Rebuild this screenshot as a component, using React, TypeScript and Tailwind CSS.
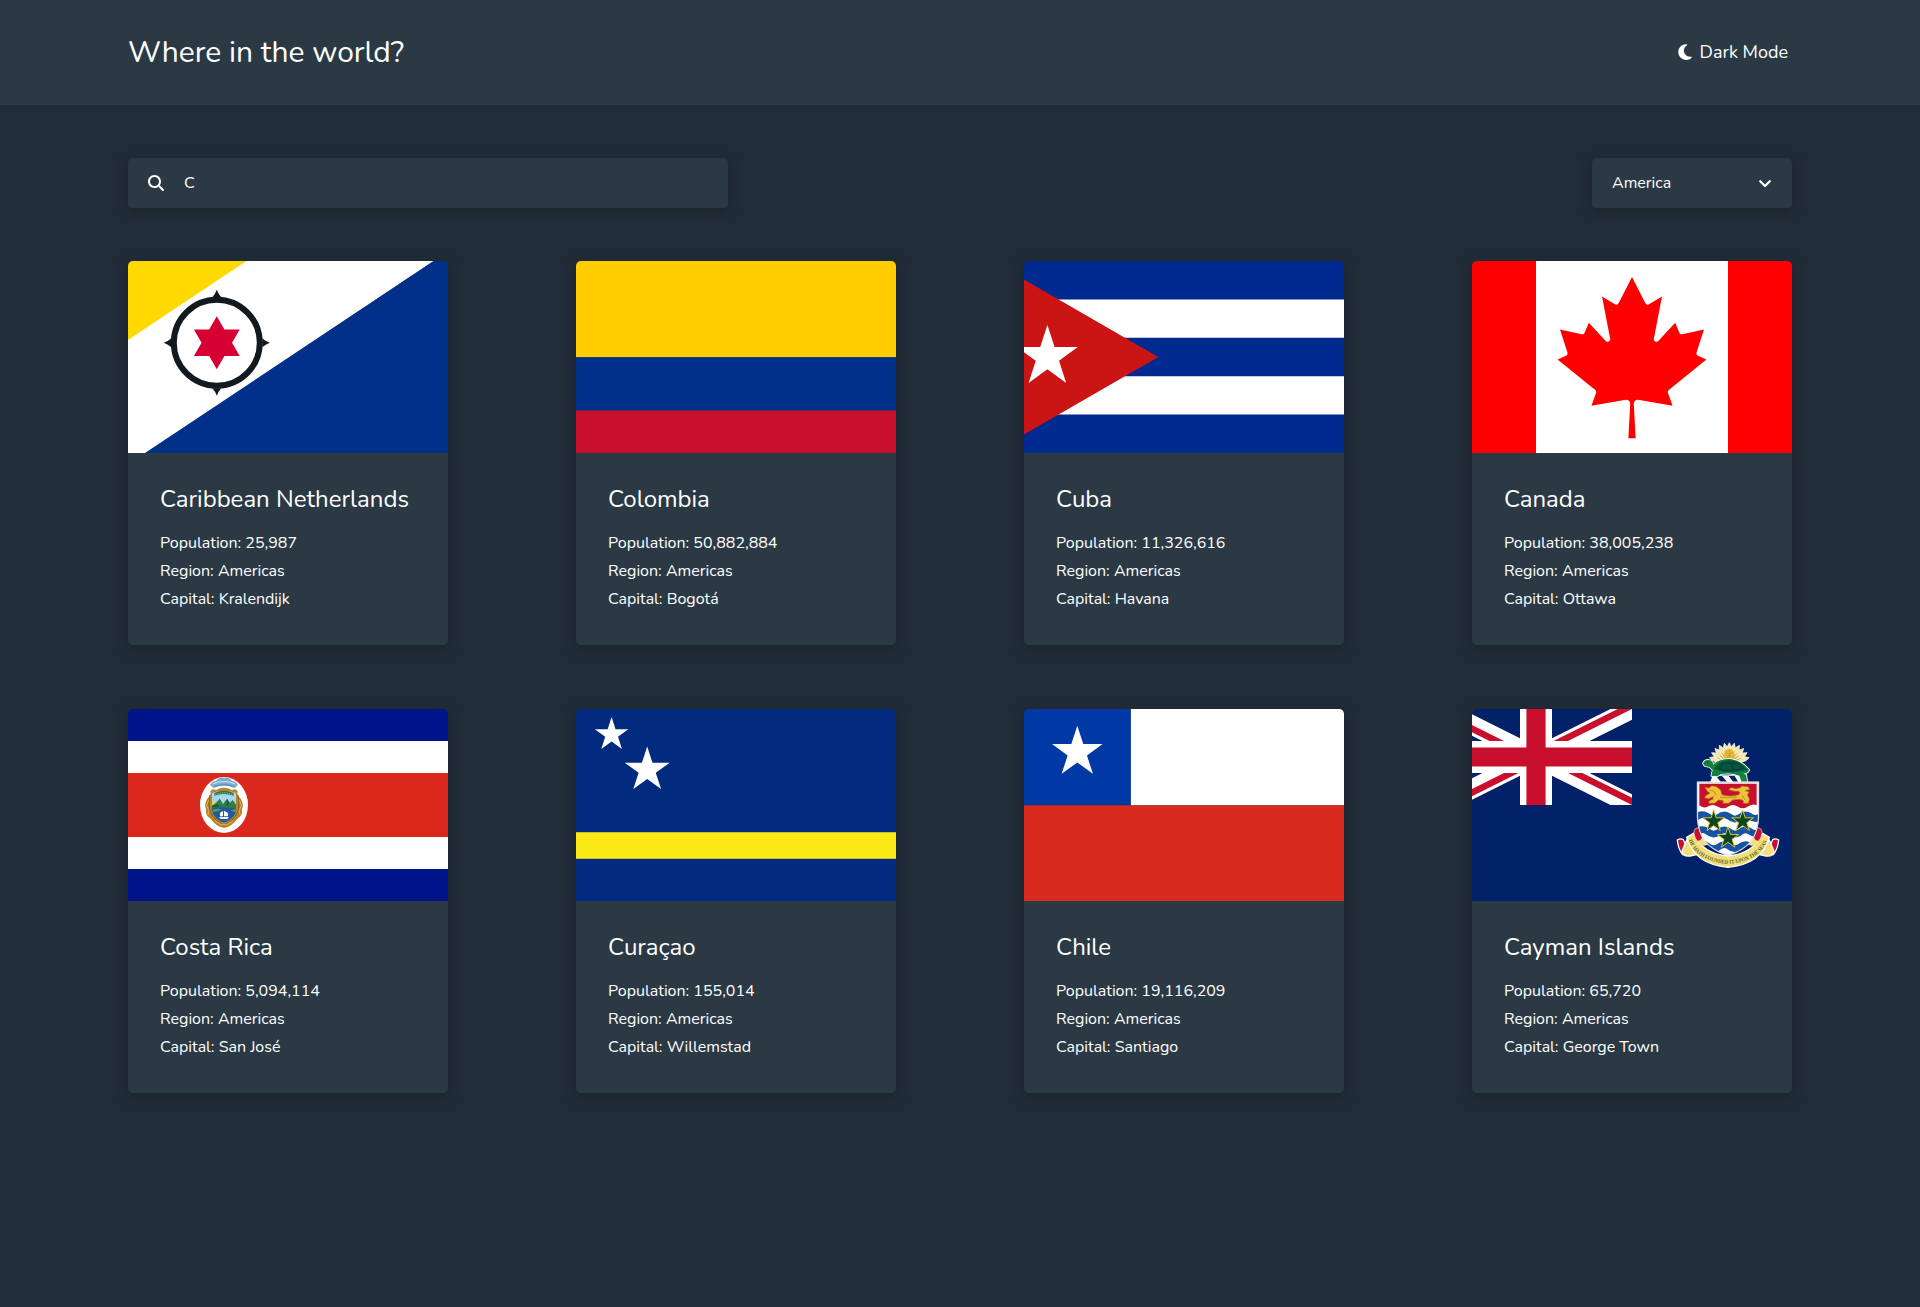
import type { ReactNode } from "react";
import { FaMagnifyingGlass, FaMoon } from "react-icons/fa6";

/* Points of a five-pointed star with one point up. */
function starPoints(cx: number, cy: number, r: number) {
  return Array.from({ length: 10 }, (_, i) => {
    const radius = i % 2 === 0 ? r : r * 0.382;
    const angle = (Math.PI / 5) * i - Math.PI / 2;
    return `${(cx + radius * Math.cos(angle)).toFixed(2)},${(cy + radius * Math.sin(angle)).toFixed(2)}`;
  }).join(" ");
}

function Bonaire() {
  return (
    <>
      <path d="M117 0H306L18 192H0V78Z" fill="#fff" />
      <path d="M0 0H118.500L0 79Z" fill="#ffd900" />
      <path d="M305.500 0H320V192H17Z" fill="#003087" />
      <circle cx="88.800" cy="81.700" r="43" fill="none" stroke="#121a20" strokeWidth="6" />
      {[0, 90, 180, 270].map((a) => (
        <path key={a} transform={`rotate(${a} 88.800 81.700)`} d="M88.800 28.700Q90.300 33 93.300 36.200H84.300Q87.300 33 88.800 28.700Z" fill="#121a20" />
      ))}
      <path d="M88.800 55.200L111.700 94.900H65.900ZM88.800 108.200L65.900 68.500H111.700Z" fill="#d60033" />
    </>
  );
}

function Colombia() {
  return (
    <>
      <rect width="320" height="96.300" fill="#ffcd00" />
      <rect y="96.300" width="320" height="53.300" fill="#003087" />
      <rect y="149.500" width="320" height="42.500" fill="#c8102e" />
    </>
  );
}

function Cuba() {
  return (
    <>
      <rect width="320" height="192" fill="#002a8f" />
      <path d="M0 38.400H320V76.800H0ZM0 115.200H320V153.600H0Z" fill="#fff" />
      <path d="M-32 0L134.300 96L-32 192Z" fill="#cb1515" />
      <polygon points={starPoints(23.4, 96, 32)} fill="#fff" />
    </>
  );
}

function Canada() {
  return (
    <>
      <rect width="320" height="192" fill="#f00" />
      <rect x="64" width="192" height="192" fill="#fff" />
      <path
        transform="translate(-32 0) scale(.04)"
        fill="#f00"
        d="m4890 4430-45-863a95 95 0 0 1 111-98l859 151-116-320a65 65 0 0 1 20-73l941-762-212-99a65 65 0 0 1-34-79l186-572-542 115a65 65 0 0 1-73-38l-105-247-423 454a65 65 0 0 1-111-57l204-1052-327 189a65 65 0 0 1-91-27l-332-652-332 652a65 65 0 0 1-91 27l-327-189 204 1052a65 65 0 0 1-111 57l-423-454-105 247a65 65 0 0 1-73 38l-542-115 186 572a65 65 0 0 1-34 79l-212 99 941 762a65 65 0 0 1 20 73l-116 320 859-151a95 95 0 0 1 111 98l-45 863z"
      />
    </>
  );
}

function CostaRica() {
  return (
    <>
      <rect width="320" height="192" fill="#001489" />
      <rect y="32" width="320" height="128" fill="#fff" />
      <rect y="64" width="320" height="64" fill="#da291c" />
      <ellipse cx="96" cy="96" rx="24" ry="28" fill="#fff" />
      <g transform="translate(52 51) scale(.3333)">
        <path d="M90 75Q94 64 108 63Q116 50 132 53Q148 50 156 63Q170 64 174 75L164 84Q132 70 100 84Z" fill="#7fadcf" />
        <path d="M98 72Q132 57 166 72" fill="none" stroke="#cfe3f0" strokeWidth="3" />
        <path d="M102 80Q132 68 162 80" fill="none" stroke="#5a93bd" strokeWidth="4" />
        <path d="M91 94Q96 84 108 90Q132 76 156 90Q168 84 173 94Q169 106 182 116Q193 132 186 148Q190 166 172 176Q158 198 132 204Q106 198 92 176Q74 166 78 148Q71 132 82 116Q95 106 91 94Z" fill="#b8842c" />
        <path d="M96 99Q132 86 168 99V148Q164 176 132 188Q100 176 96 148Z" fill="#a8d8ee" />
        <path d="M103 99Q132 86 161 99V107Q132 97 103 107Z" fill="#31743d" />
        <path d="M106 104Q132 93 158 104" fill="none" stroke="#fff" strokeWidth="2" strokeDasharray="3 4" />
        <circle cx="103" cy="131" r="7" fill="#ffd22e" />
        <path d="M96 137L108 128L119 116L129 132L141 116L149 129L158 120L168 134V156H96Z" fill="#2e7d4b" />
        <path d="M96 137L112 133L120 140H96ZM141 116L149 129L140 139Z" fill="#175a38" />
        <path d="M96 144Q132 138 168 146V153Q162 177 132 188Q102 177 96 153Z" fill="#1d5aa0" />
        <path d="M97 150Q114 143 124 149Q114 154 98 156ZM152 151L168 147V156Q158 157 152 151Z" fill="#54a052" />
        <path d="M117 171H147L142 177H122ZM120 169V158L129 153V169ZM132 169V152L144 159V169Z" fill="#fff" />
        <path d="M90 105Q84 134 91 156Q104 184 132 194Q160 184 173 156Q180 134 174 105" fill="none" stroke="#8a5a1e" strokeWidth="3" />
        <path d="M86 120L80 136L86 152L84 164M178 120L184 136L178 152L180 164M106 184L122 193H142L158 184" fill="none" stroke="#e0b45a" strokeWidth="3" />
      </g>
    </>
  );
}

function Curacao() {
  return (
    <>
      <rect width="320" height="192" fill="#002b7f" />
      <rect y="123.200" width="320" height="26.600" fill="#f9e814" />
      <polygon points={starPoints(35.6, 25.7, 17.6)} fill="#fff" />
      <polygon points={starPoints(71.2, 61, 23.6)} fill="#fff" />
    </>
  );
}

function Chile() {
  return (
    <>
      <rect x="106.700" width="213.300" height="96.300" fill="#fff" />
      <rect width="106.700" height="96.300" fill="#0039a6" />
      <rect y="96.300" width="320" height="95.700" fill="#d72b1f" />
      <polygon points={starPoints(53.3, 43.3, 26.6)} fill="#fff" />
    </>
  );
}

function Cayman() {
  const arms = "M113 157H295V262Q293 306 272 334Q248 362 204 376Q160 362 136 334Q115 306 113 262Z";
  return (
    <>
      <rect width="320" height="192" fill="#012169" />
      <clipPath id="canton">
        <rect width="160" height="96" />
      </clipPath>
      <clipPath id="saltire">
        <path d="M30 15H60V30ZM30 15V30H0ZM30 15H0V0ZM30 15V0H60Z" />
      </clipPath>
      <g clipPath="url(#canton)">
        <g transform="translate(-32 0) scale(3.2)">
          <path d="M0 0L60 30M60 0L0 30" stroke="#fff" strokeWidth="6" />
          <path d="M0 0L60 30M60 0L0 30" clipPath="url(#saltire)" stroke="#c8102e" strokeWidth="4" />
          <path d="M30 0V30M0 15H60" stroke="#fff" strokeWidth="10" />
          <path d="M30 0V30M0 15H60" stroke="#c8102e" strokeWidth="6" />
        </g>
      </g>
      <g transform="translate(188 21) scale(.3333)">
        {/* pineapple */}
        {[-74, -59, -44, -29, -14, 0, 14, 29, 44, 59, 74].map((a) => (
          <path key={a} transform={`rotate(${a} 208 100)`} d="M199 96L202 50L208 38L214 50L217 96Z" fill="#f4e7a8" stroke="#fff" strokeWidth="2" />
        ))}
        {[-66, -50, -36, -22, -8, 8, 22, 36, 50, 66].map((a) => (
          <path key={a} transform={`rotate(${a} 208 100)`} d="M204 96L208 55L212 96Z" fill="#dba92c" />
        ))}
        <ellipse cx="208" cy="76" rx="16" ry="20" fill="#e6b93c" />
        <path d="M198 66L218 86M218 66L198 86M208 58V94" stroke="#b88420" strokeWidth="1.500" />

        {/* turtle standing on a rope */}
        <path d="M158 136H262L258 158H150Z" fill="#fff" />
        <path d="M168 138L184 158H204L186 138ZM206 138L222 158H236L224 138ZM240 138L250 158H258L252 138Z" fill="#012169" />
        <path
          d="M129 100Q134 88 148 90Q158 92 160 104Q176 86 212 87Q246 92 268 120Q264 130 250 131L258 134L262 156L246 158L238 137Q216 128 184 132L172 139L154 138L158 120L148 111L134 108Z"
          fill="#12813c"
          stroke="#fff"
          strokeWidth="5"
          strokeLinejoin="round"
          paintOrder="stroke"
        />
        <path d="M162 117Q176 91 212 91Q244 94 263 120Q208 134 162 117Z" fill="#075638" />
        <path d="M180 116L190 97L214 101L220 121L194 124ZM214 101L236 100L250 116L220 121" fill="none" stroke="#013f50" strokeWidth="4" />
        <circle cx="142" cy="98" r="2" fill="#062c1a" />

        {/* motto ribbon */}
        <g stroke="#fff" strokeWidth="4" strokeLinejoin="round">
          <path d="M52 330Q60 325 69 328L86 362L68 374Q54 356 52 330Z" fill="#c8102e" />
          <path d="M356 330Q348 325 339 328L322 362L340 374Q354 356 356 330Z" fill="#c8102e" />
          <path d="M80 330L66 364Q68 380 90 378L126 370ZM328 330L342 364Q340 380 318 378L282 370Z" fill="#f4de78" />
          <path d="M80 322L100 310Q128 372 204 378Q280 372 308 310L328 322Q306 402 204 412Q102 402 80 322Z" fill="#f4de78" />
        </g>
        <path d="M104 308L136 296L150 340Q134 352 122 344Q108 328 104 308ZM304 308L272 296L258 340Q274 352 286 344Q300 328 304 308Z" fill="#f4de78" />
        <path d="M102 310Q100 292 120 293Q134 298 130 318Q124 334 113 334Q104 326 102 310ZM306 310Q308 292 288 293Q274 298 278 318Q284 334 295 334Q304 326 306 310Z" fill="#c8102e" stroke="#f3ebe0" strokeWidth="2" />
        <path id="motto-arc" d="M84 328Q110 396 204 402Q298 396 325 326" fill="none" />
        <text fontFamily="Liberation Serif" fontSize="17" fontWeight="700" fill="#56682b">
          <textPath href="#motto-arc" startOffset="4" textLength="288" lengthAdjust="spacingAndGlyphs">
            HE HATH FOUNDED IT UPON THE SEAS
          </textPath>
        </text>

        {/* shield */}
        <clipPath id="shield">
          <path d={arms} />
        </clipPath>
        <path d={arms} fill="#fff" stroke="#fff" strokeWidth="5" />
        <g clipPath="url(#shield)">
          <path d="M118 161H290V226Q280 220 266 228Q250 240 234 230Q218 220 204 230Q190 240 174 230Q158 220 142 230Q130 236 118 226Z" fill="#c8102e" />
          {[263, 308, 352].map((y) => (
            <path
              key={y}
              d={`M108 ${y}Q124 ${y - 16} 142 ${y - 4}Q158 ${y + 10} 174 ${y}Q190 ${y - 14} 206 ${y - 4}Q222 ${y + 10} 238 ${y}Q254 ${y - 14} 270 ${y - 4}Q286 ${y + 8} 300 ${y - 2}`}
              fill="none"
              stroke="#1554a3"
              strokeWidth="20"
            />
          ))}
        </g>
        <path d={arms} fill="none" stroke="#c4c4cf" strokeWidth="2" />
        {/* lion */}
        <path
          d="M134 172L146 174L156 167L170 170L182 180L186 194Q210 202 236 194Q244 184 232 184Q214 184 206 178Q212 170 226 176Q240 176 246 168L264 170L270 178L256 182L268 186L262 194L268 206L266 220L250 220L250 212L240 208L218 210L206 220L188 220L190 212L176 210L164 220L146 220L148 212L158 208L160 200L146 206L134 204L138 196L150 190L142 184Z"
          fill="#f0c23c"
          stroke="#a66a1a"
          strokeWidth="2"
        />
        <path d="M150 180Q166 182 168 196M180 202L230 202M246 196L256 210" fill="none" stroke="#a66a1a" strokeWidth="2" />
        {[
          [161, 274],
          [248, 274],
          [204, 324],
        ].map(([x, y]) => (
          <polygon key={x} points={starPoints(x, y, 34)} fill="#08471f" stroke="#dfc13a" strokeWidth="3" />
        ))}
      </g>
    </>
  );
}

type Country = {
  name: string;
  population: string;
  capital: string;
  flag: ReactNode;
};

const countries: Country[] = [
  { name: "Caribbean Netherlands", population: "25,987", capital: "Kralendijk", flag: <Bonaire /> },
  { name: "Colombia", population: "50,882,884", capital: "Bogotá", flag: <Colombia /> },
  { name: "Cuba", population: "11,326,616", capital: "Havana", flag: <Cuba /> },
  { name: "Canada", population: "38,005,238", capital: "Ottawa", flag: <Canada /> },
  { name: "Costa Rica", population: "5,094,114", capital: "San José", flag: <CostaRica /> },
  { name: "Curaçao", population: "155,014", capital: "Willemstad", flag: <Curacao /> },
  { name: "Chile", population: "19,116,209", capital: "Santiago", flag: <Chile /> },
  { name: "Cayman Islands", population: "65,720", capital: "George Town", flag: <Cayman /> },
];

function CountryCard({ name, population, capital, flag }: Country) {
  return (
    <article className="h-96 w-80 overflow-hidden rounded-[5px] bg-[#2b3945] shadow-[0_3px_10px_rgba(26,36,38,0.7)]">
      <svg viewBox="0 0 320 192" className="block h-48 w-80">
        {flag}
      </svg>
      <div className="px-8 pt-[30px]">
        <h2 className="text-2xl leading-[33px]">{name}</h2>
        <div className="mt-[13px] text-base leading-7">
          <p>Population: {population}</p>
          <p>Region: Americas</p>
          <p>Capital: {capital}</p>
        </div>
      </div>
    </article>
  );
}

export default function App() {
  return (
    <div className="min-h-[1307px] bg-[#202c37] font-['Nunito','Lato',sans-serif] text-white">
      <header className="flex h-[105px] items-center justify-between bg-[#2b3945] pr-[132px] pl-32">
        <h1 className="text-[30px] leading-[41px]">Where in the world?</h1>
        <button className="flex items-center gap-2 text-lg leading-[25px]">
          <FaMoon className="mb-px h-[18px] w-3.5" />
          Dark Mode
        </button>
      </header>
      <main className="px-32 pt-[53px]">
        <div className="flex justify-between">
          <label className="flex h-[50px] w-[600px] items-center gap-5 rounded-[5px] bg-[#2b3945] px-5 shadow-[0_3px_10px_rgba(26,36,38,0.7)]">
            <FaMagnifyingGlass className="size-4" />
            <input className="grow bg-transparent text-base outline-none" defaultValue="C" />
          </label>
          <button className="flex h-[50px] w-[200px] items-center justify-between rounded-[5px] bg-[#2b3945] px-5 text-base shadow-[0_3px_10px_rgba(26,36,38,0.7)]">
            America
            <svg viewBox="0 0 14 14" className="size-3.5" fill="none" stroke="currentColor" strokeWidth="2.200" strokeLinecap="round" strokeLinejoin="round">
              <path d="M2.200 5.200L7 10L11.800 5.200" />
            </svg>
          </button>
        </div>
        <section className="mt-[53px] grid grid-cols-[repeat(4,320px)] justify-between gap-y-16">
          {countries.map((country) => (
            <CountryCard key={country.name} {...country} />
          ))}
        </section>
      </main>
    </div>
  );
}
